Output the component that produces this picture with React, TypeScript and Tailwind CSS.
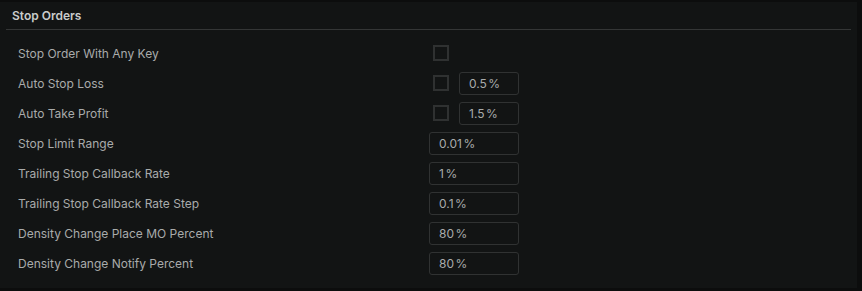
import React from "react";

type Row = { label: string; check?: boolean; value?: string };

const rows: Row[] = [
  { label: "Stop Order With Any Key", check: true },
  { label: "Auto Stop Loss", check: true, value: "0.5" },
  { label: "Auto Take Profit", check: true, value: "1.5" },
  { label: "Stop Limit Range", value: "0.01" },
  { label: "Trailing Stop Callback Rate", value: "1" },
  { label: "Trailing Stop Callback Rate Step", value: "0.1" },
  { label: "Density Change Place MO Percent", value: "80" },
  { label: "Density Change Notify Percent", value: "80" },
];

function Field({ value, wide }: { value: string; wide?: boolean }) {
  return (
    <div
      className={`flex h-[23px] items-center rounded-[3px] border border-[#303232] pl-[9px] pt-px text-[12px] text-[#a9abab] ${
        wide ? "w-[90px]" : "w-[60px]"
      }`}
    >
      {value}
      <span className="ml-[1.5px]">%</span>
    </div>
  );
}

export default function App() {
  return (
    <div
      className="h-[291px] w-[862px] bg-[#0c0d0d] pt-[2px] pr-[5px] pb-[3px]"
      style={{ fontFamily: "Inter, 'Noto Sans', sans-serif" }}
    >
      <div className="h-full bg-[#121414]">
        <div className="px-[12px] pt-[5px] pb-[4px] text-[12px] font-semibold text-[#c9cbcb]">Stop Orders</div>
        <div className="mx-[6px] h-px bg-[#343636]" />
        <div className="pt-[8px]">
          {rows.map((r) => (
            <div key={r.label} className="flex h-[30px] items-center">
              <div className="w-[429px] pl-[18px] pt-[2px] text-[12px] text-[#a9abab]">{r.label}</div>
              {r.check ? (
                <div className="flex items-center">
                  <div className="ml-[4px] h-[16px] w-[16px] border-2 border-[#2f3131]" />
                  {r.value && (
                    <div className="ml-[10px]">
                      <Field value={r.value} />
                    </div>
                  )}
                </div>
              ) : (
                <Field value={r.value!} wide />
              )}
            </div>
          ))}
        </div>
      </div>
    </div>
  );
}
